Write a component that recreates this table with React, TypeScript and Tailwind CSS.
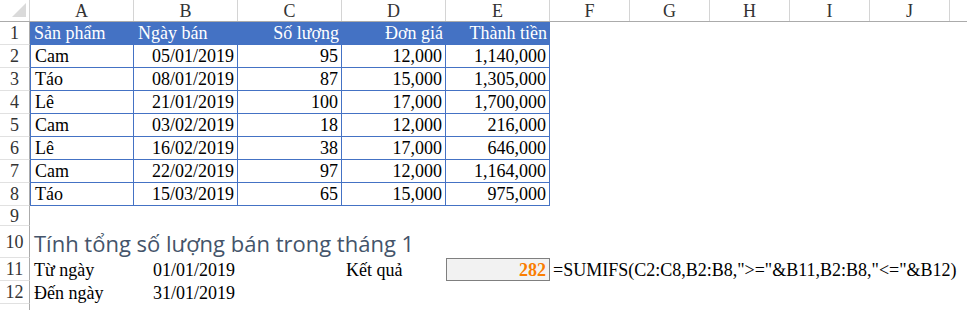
import React from 'react';

const cols = [
  { name: 'A', w: 'w-[104px]' },
  { name: 'B', w: 'w-[104px]' },
  { name: 'C', w: 'w-[104px]' },
  { name: 'D', w: 'w-[104px]' },
  { name: 'E', w: 'w-[104px]' },
  { name: 'F', w: 'w-[80px]' },
  { name: 'G', w: 'w-[80px]' },
  { name: 'H', w: 'w-[80px]' },
  { name: 'I', w: 'w-[80px]' },
  { name: 'J', w: 'w-[80px]' },
];

const data = [
  ['Cam', '05/01/2019', '95', '12,000', '1,140,000'],
  ['Táo', '08/01/2019', '87', '15,000', '1,305,000'],
  ['Lê', '21/01/2019', '100', '17,000', '1,700,000'],
  ['Cam', '03/02/2019', '18', '12,000', '216,000'],
  ['Lê', '16/02/2019', '38', '17,000', '646,000'],
  ['Cam', '22/02/2019', '97', '12,000', '1,164,000'],
  ['Táo', '15/03/2019', '65', '15,000', '975,000'],
];

const RowNum: React.FC<{ n?: number; h: string }> = ({ n, h }) => (
  <div className={`w-[30px] shrink-0 ${h} flex items-center justify-center border-r border-b border-r-[#ababab] border-b-[#e1e1e1] text-[#333]`}>
    {n}
  </div>
);

const Blank: React.FC<{ w: string }> = ({ w }) => <div className={`${w} shrink-0`} />;

export default function App() {
  return (
    <div className="w-[967px] h-[310px] overflow-hidden bg-white text-[18px] leading-none font-['Liberation_Serif','Times_New_Roman',serif]">
      {/* column headers */}
      <div className="flex h-[22px] border-b border-[#ababab]">
        <div className="w-[30px] shrink-0 relative border-r border-[#d4d4d4]">
          <svg className="absolute left-0 top-0" width="30" height="21" viewBox="0 0 30 21">
            <polygon points="12,17 26,17 26,3" fill="#dadada" />
          </svg>
        </div>
        {cols.map(c => (
          <div key={c.name} className={`${c.w} shrink-0 flex items-center justify-center border-r border-[#d4d4d4] text-[#333]`}>
            {c.name}
          </div>
        ))}
        <div className="flex-1" />
      </div>

      {/* row 1: table header */}
      <div className="flex h-[23px]">
        <RowNum n={1} h="h-[23px]" />
        <div className="flex w-[520px] shrink-0 bg-[#4472c4] text-white border-b border-[#4472c4]">
          <div className="w-[104px] flex items-center pl-[4px]">Sản phẩm</div>
          <div className="w-[104px] flex items-center pl-[4px]">Ngày bán</div>
          <div className="w-[104px] flex items-center justify-end pr-[3px]">Số lượng</div>
          <div className="w-[104px] flex items-center justify-end pr-[3px]">Đơn giá</div>
          <div className="w-[104px] flex items-center justify-end pr-[3px]">Thành tiền</div>
        </div>
      </div>

      {/* rows 2-8 */}
      {data.map((r, i) => (
        <div key={i} className="flex h-[23px]">
          <RowNum n={i + 2} h="h-[23px]" />
          <div className="w-[104px] shrink-0 flex items-center pl-[4px] border-l border-r border-b border-[#4472c4]">{r[0]}</div>
          <div className="w-[104px] shrink-0 flex items-center justify-end pr-[3px] border-r border-b border-[#4472c4]">{r[1]}</div>
          <div className="w-[104px] shrink-0 flex items-center justify-end pr-[3px] border-r border-b border-[#4472c4]">{r[2]}</div>
          <div className="w-[104px] shrink-0 flex items-center justify-end pr-[3px] border-r border-b border-[#4472c4]">{r[3]}</div>
          <div className="w-[104px] shrink-0 flex items-center justify-end pr-[3px] border-r border-b border-[#4472c4]">{r[4]}</div>
        </div>
      ))}

      {/* row 9 */}
      <div className="flex h-[20px]">
        <RowNum n={9} h="h-[20px]" />
      </div>

      {/* row 10: title */}
      <div className="flex h-[32px]">
        <RowNum n={10} h="h-[32px]" />
        <div className="flex items-end pb-[4px] pl-[4px] whitespace-nowrap text-[22px] text-[#44546a] font-['Open_Sans','Noto_Sans',sans-serif]">
          Tính tổng số lượng bán trong tháng 1
        </div>
      </div>

      {/* row 11 */}
      <div className="flex h-[23px]">
        <RowNum n={11} h="h-[23px]" />
        <div className="w-[104px] shrink-0 flex items-center pl-[4px]">Từ ngày</div>
        <div className="w-[104px] shrink-0 flex items-center justify-end pr-[3px]">01/01/2019</div>
        <Blank w="w-[104px]" />
        <div className="w-[104px] shrink-0 flex items-center pl-[4px]">Kết quả</div>
        <div className="w-[104px] shrink-0 flex items-center justify-end pr-[3px] bg-[#f2f2f2] border border-[#7f7f7f] font-bold text-[#fa7d00]">282</div>
        <div className="flex items-center pl-[3px] whitespace-nowrap">=SUMIFS(C2:C8,B2:B8,"&gt;="&amp;B11,B2:B8,"&lt;="&amp;B12)</div>
      </div>

      {/* row 12 */}
      <div className="flex h-[23px]">
        <RowNum n={12} h="h-[23px]" />
        <div className="w-[104px] shrink-0 flex items-center pl-[4px]">Đến ngày</div>
        <div className="w-[104px] shrink-0 flex items-center justify-end pr-[3px]">31/01/2019</div>
      </div>

      {/* row 13 */}
      <div className="flex h-[23px]">
        <RowNum h="h-[23px]" />
      </div>
    </div>
  );
}
